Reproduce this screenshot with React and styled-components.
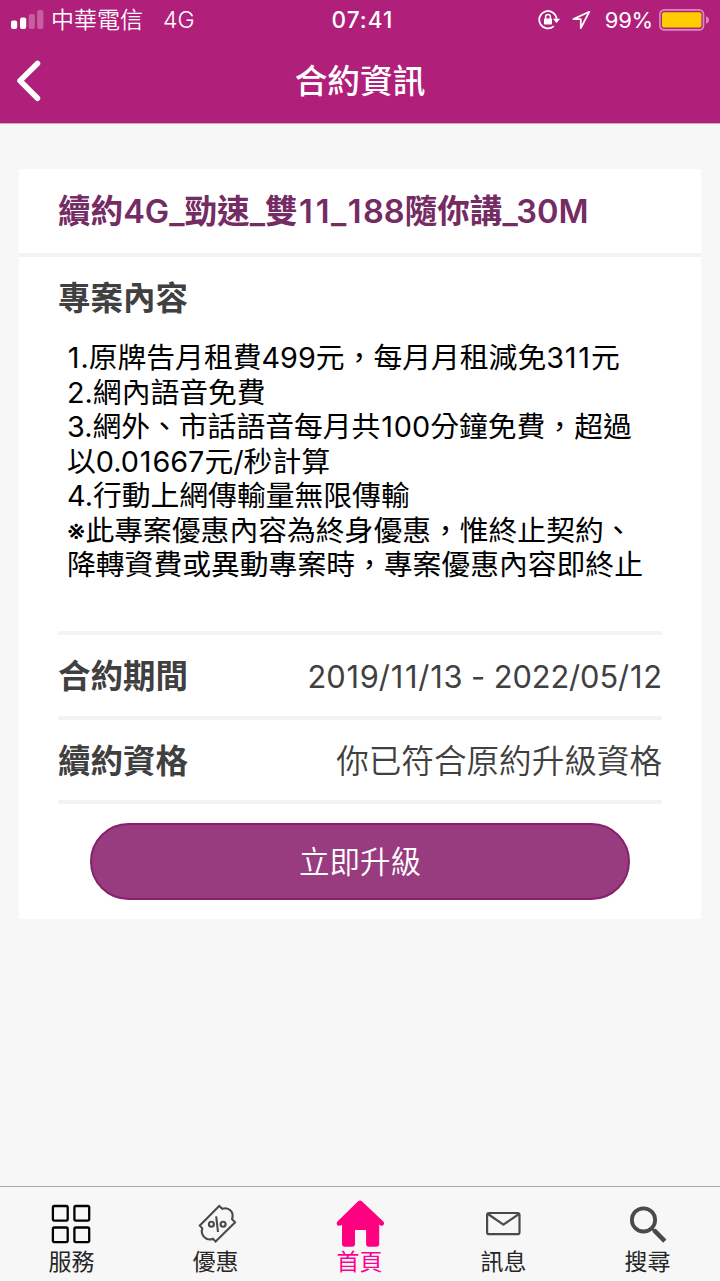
import styled, { createGlobalStyle } from "styled-components";

const GlobalStyle = createGlobalStyle`
  body {
    margin: 0;
    background: #f7f7f7;
    font-family: Inter, "Noto Sans CJK TC", sans-serif;
  }
`;

const Page = styled.div`
  width: 720px;
  height: 1281px;
  display: flex;
  flex-direction: column;
  overflow: hidden;
  background: #f7f7f7;
`;

const Header = styled.header`
  height: 124px;
  box-sizing: border-box;
  flex-shrink: 0;
  background: #b0207b;
  border-bottom: 1px solid #cfaac1;
  color: #fff;
`;

const StatusBar = styled.div`
  height: 40px;
  display: grid;
  grid-template-columns: 1fr auto 1fr;
  align-items: center;
  font-size: 22px;
  line-height: 40px;
  padding: 0 10px 0 11px;
`;

const Carrier = styled.div`
  display: flex;
  align-items: center;
  font-size: 23px;
  font-weight: 350;
`;

const Network = styled.span`
  margin-left: 20px;
  font-size: 23px;
`;

const Signal = styled.svg`
  width: 33px;
  height: 20px;
  margin-right: 7px;
`;

const Clock = styled.div`
  padding-left: 4px;
  font-weight: 500;
  font-size: 22.5px;
  letter-spacing: 1.1px;
`;

const Status = styled.div`
  display: flex;
  align-items: center;
  justify-content: flex-end;
`;

const Arrow = styled.svg`
  width: 19px;
  height: 20px;
  margin-left: 12px;
`;

const Percent = styled.span`
  margin: 0 6px 0 14px;
  letter-spacing: -0.2px;
`;

const NavBar = styled.div`
  height: 82px;
  display: grid;
  grid-template-columns: 60px 1fr 60px;
  align-items: center;
`;

const BackButton = styled.button`
  padding: 0 0 0 14px;
  border: 0;
  background: none;
  display: flex;
`;

const NavTitle = styled.h1`
  margin: 0;
  font-size: 32.7px;
  line-height: 82px;
  font-weight: 500;
  text-align: center;
`;

const Card = styled.main`
  margin: 45px 19px 0;
  height: 750px;
  box-sizing: border-box;
  background: #fff;
`;

const PlanName = styled.h2`
  margin: 0;
  height: 88px;
  box-sizing: border-box;
  padding: 0 39px;
  border-bottom: 4px solid #f3f3f3;
  color: #752b63;
  font-size: 32.6px;
  line-height: 84px;
  font-weight: 600;
  white-space: nowrap;
`;

const Content = styled.div`
  padding: 0 39px;
`;

const Label = styled.span`
  font-size: 32.5px;
  font-weight: 600;
  color: #404040;
`;

const Detail = styled.section`
  height: 378px;
  box-sizing: border-box;
  padding-top: 18px;
  border-bottom: 4px solid #f3f3f3;
  ${Label} {
    display: block;
    line-height: 48px;
  }
`;

const Terms = styled.div`
  margin: 18px 0 0 9px;
  color: #000;
  font-size: 28.8px;
  font-weight: 370;
`;

const Term = styled.div`
  height: 34.5px;
  line-height: 34.5px;
  white-space: nowrap;
`;

// the digit 1 is set wider than Inter draws it
const One = styled.span`
  padding: 0 0.03em;
  ${PlanName} & {
    padding: 0 0.045em;
  }
`;

const Row = styled.div`
  height: 84.5px;
  box-sizing: border-box;
  padding-top: 3px;
  display: flex;
  align-items: center;
  justify-content: space-between;
  line-height: 77px;
  border-bottom: 4px solid #f3f3f3;
`;

const Value = styled.span`
  color: #404040;
  font-size: ${(props) => props.$size || "32.6px"};
  font-weight: ${(props) => props.$weight || 350};
  letter-spacing: ${(props) => props.$spacing || "0"};
`;

const UpgradeButton = styled.button`
  display: block;
  width: 540px;
  height: 77px;
  margin: 19px auto 0;
  padding: 0;
  border: 2px solid #85226a;
  border-radius: 39px;
  background: #993c7f;
  color: #fff;
  font-family: inherit;
  font-size: 30.5px;
  font-weight: 350;
  line-height: 73px;
`;

const TabBar = styled.nav`
  margin-top: auto;
  height: 95px;
  box-sizing: border-box;
  border-top: 1px solid #a9a9a9;
  display: grid;
  grid-template-columns: repeat(5, 144px);
`;

const Tab = styled.a`
  display: flex;
  flex-direction: column;
  align-items: center;
  padding-top: 10px;
  font-size: 23px;
  line-height: 26px;
  color: ${(props) => (props.$active ? "#ff0094" : "#262626")};
  svg {
    width: 54px;
    height: 52px;
  }
`;

const TabName = styled.span`
  padding-right: 1px;
`;

const TERMS = [
  "1.原牌告月租費499元，每月月租減免311元",
  "2.網內語音免費",
  "3.網外、市話語音每月共100分鐘免費，超過",
  "以0.01667元/秒計算",
  "4.行動上網傳輸量無限傳輸",
  "※此專案優惠內容為終身優惠，惟終止契約、",
  "降轉資費或異動專案時，專案優惠內容即終止",
];

const spaceOnes = (text) =>
  text.split(/(1)/).map((part, i) => (part === "1" ? <One key={i}>1</One> : part));

const SignalIcon = () => (
  <Signal viewBox="0 0 33 20" fill="#fff">
    <rect x="0" y="10.5" width="6.2" height="8.5" rx="2" />
    <rect x="9" y="7.5" width="6.2" height="11.5" rx="2" />
    <rect x="17.7" y="4" width="6.2" height="15" rx="2" opacity=".28" />
    <rect x="26.2" y="0" width="6.2" height="19" rx="2" opacity=".28" />
  </Signal>
);

const LockIcon = () => (
  <svg width="22" height="20" viewBox="0 0 22 20" fill="none" stroke="#fff">
    <path d="M15.8 16.2A8.7 8.7 0 1 1 18.6 8.8" strokeWidth="1.8" />
    <path d="M15 8.8h7L18.5 13z" fill="#fff" stroke="none" />
    <rect x="6" y="8.6" width="8" height="6" rx="0.8" fill="#fff" stroke="none" />
    <path d="M7.6 9V6.8a2.4 2.4 0 0 1 4.8 0V9" strokeWidth="1.5" />
  </svg>
);

const ArrowIcon = () => (
  <Arrow viewBox="0 0 19 20" fill="none">
    <path
      d="M17.2 1.8 1.4 9.1h7.4v9z"
      stroke="#fff"
      strokeWidth="1.8"
      strokeLinejoin="round"
    />
  </Arrow>
);

const BatteryIcon = () => (
  <svg width="51" height="22" viewBox="0 0 51 22">
    <rect x=".9" y=".9" width="43.6" height="20" rx="4.5" fill="none" stroke="#fff" strokeOpacity=".48" strokeWidth="1.7" />
    <rect x="3" y="3.2" width="39.4" height="15.4" rx="2" fill="#fc0" />
    <path d="M47 7.2q3 1.1 3 3.8t-3 3.8z" fill="#fff" fillOpacity=".48" />
  </svg>
);

const ServiceIcon = () => (
  <svg viewBox="0 0 54 52" fill="none" stroke="#000" strokeWidth="2.3">
    <rect x="7.9" y="9" width="14.8" height="14.6" rx="1.5" />
    <rect x="29.4" y="9" width="14.8" height="14.6" rx="1.5" />
    <rect x="7.9" y="30.5" width="14.8" height="14.6" rx="1.5" />
    <rect x="29.4" y="30.5" width="14.8" height="14.6" rx="1.5" />
  </svg>
);

const CouponIcon = () => (
  <svg viewBox="0 0 54 52" fill="none" stroke="#4a4a4a" strokeWidth="2.1">
    <path d="M30.2 9 10.8 28.6 13.3 31.4C11 38.4 17.7 44.4 24 41.7L26.6 44.6 46 25.4 43 22C45.5 15.4 39.8 9.4 33.3 11.8Z" />
    <circle cx="22.4" cy="27.2" r="2.5" />
    <circle cx="34.1" cy="27.2" r="2.5" />
    <path d="M27.2 19.3 29 35" />
  </svg>
);

const HomeIcon = () => (
  <svg viewBox="0 0 54 52" fill="#ff0080">
    <path d="M25.1 4.2q1.9-1.6 3.8 0l21.4 20.2c2.2 2.2-.6 5.8-3.2 3.8l-.9-.5V47q0 2.800-2.800 2.800H36q-2.900 0-2.900-2.800V33H22v14q0 2.800-2.900 2.800h-7.300Q9 49.800 9 47V27.700l-.9.5C5.500 30.200 2.200 27 4.500 24.400z" />
  </svg>
);

const MailIcon = () => (
  <svg viewBox="0 0 54 52" fill="none" stroke="#4a4a4a" strokeWidth="2.2" strokeLinejoin="round">
    <rect x="10.1" y="16" width="32.4" height="21.2" rx="2" />
    <path d="m11 17 15.4 10.6L42 17" />
  </svg>
);

const SearchIcon = () => (
  <svg viewBox="0 0 54 52" fill="none" stroke="#4a4a4a">
    <circle cx="22.5" cy="22.9" r="11.6" strokeWidth="3.8" />
    <path d="m31 31.5 3 3" strokeWidth="2.5" />
    <path d="m33 33.2 10.8 11" strokeWidth="4.5" />
  </svg>
);

const TABS = [
  { name: "服務", Icon: ServiceIcon },
  { name: "優惠", Icon: CouponIcon },
  { name: "首頁", Icon: HomeIcon, active: true },
  { name: "訊息", Icon: MailIcon },
  { name: "搜尋", Icon: SearchIcon },
];

const App = () => {
  return (
    <Page>
      <GlobalStyle />
      <Header>
        <StatusBar>
          <Carrier>
            <SignalIcon />
            中華電信
            <Network>4G</Network>
          </Carrier>
          <Clock>07:41</Clock>
          <Status>
            <LockIcon />
            <ArrowIcon />
            <Percent>99%</Percent>
            <BatteryIcon />
          </Status>
        </StatusBar>
        <NavBar>
          <BackButton>
            <svg width="30" height="44" viewBox="0 0 30 44" fill="none" stroke="#fff" strokeWidth="5.5" strokeLinecap="round" strokeLinejoin="round">
              <path d="M23.5 4.5 6 21.8l17.5 17.5" />
            </svg>
          </BackButton>
          <NavTitle>合約資訊</NavTitle>
        </NavBar>
      </Header>
      <Card>
        <PlanName>{spaceOnes("續約4G_勁速_雙11_188隨你講_30M")}</PlanName>
        <Content>
          <Detail>
            <Label>專案內容</Label>
            <Terms>
              {TERMS.map((term) => (
                <Term key={term}>{spaceOnes(term)}</Term>
              ))}
            </Terms>
          </Detail>
          <Row>
            <Label>合約期間</Label>
            <Value $size="30.8px" $weight={400} $spacing="-0.1px">
              {spaceOnes("2019/11/13 - 2022/05/12")}
            </Value>
          </Row>
          <Row>
            <Label>續約資格</Label>
            <Value>你已符合原約升級資格</Value>
          </Row>
          <UpgradeButton>立即升級</UpgradeButton>
        </Content>
      </Card>
      <TabBar>
        {TABS.map(({ name, Icon, active }) => (
          <Tab key={name} $active={active}>
            <Icon />
            <TabName>{name}</TabName>
          </Tab>
        ))}
      </TabBar>
    </Page>
  );
};

export default App;
